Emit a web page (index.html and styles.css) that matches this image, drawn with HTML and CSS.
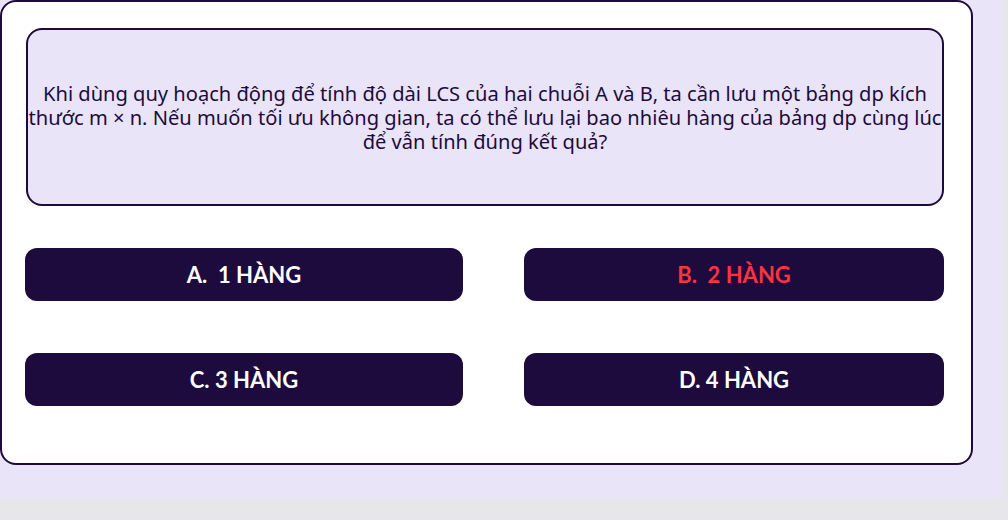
FILE: index.html
```html
<!DOCTYPE html>
<html lang="vi">
<head>
<meta charset="utf-8">
<title>Quiz</title>
<link rel="stylesheet" href="styles.css">
</head>
<body>
<div class="stage">
  <div class="card">
    <div class="question">
      <p>Khi dùng quy hoạch động để tính độ dài LCS của hai chuỗi A và B, ta cần lưu một bảng dp kích<br>thước m × n. Nếu muốn tối ưu không gian, ta có thể lưu lại bao nhiêu hàng của bảng dp cùng lúc<br>để vẫn tính đúng kết quả?</p>
    </div>
    <div class="answers">
      <button class="answer">A.&nbsp; 1 HÀNG</button>
      <button class="answer answer-wrong">B.&nbsp; 2 HÀNG</button>
      <button class="answer">C. 3 HÀNG</button>
      <button class="answer">D. 4 HÀNG</button>
    </div>
  </div>
</div>
</body>
</html>
```

FILE: styles.css
```css
html, body {
  margin: 0;
  padding: 0;
}
body {
  background: #e6e6eb;
  width: 1008px;
  height: 520px;
  overflow: hidden;
  font-family: "Noto Sans", "Open Sans", sans-serif;
}
.stage {
  width: 1002px;
  height: 498px;
  background: #e9e4f8;
}
.card {
  box-sizing: border-box;
  width: 973px;
  height: 465px;
  background: #ffffff;
  border: 2px solid #1e0b3d;
  border-radius: 16px;
  padding: 26px 0 0 24px;
}
.question {
  box-sizing: border-box;
  width: 918px;
  height: 178px;
  background: #e9e4f8;
  border: 2px solid #1e0b3d;
  border-radius: 16px;
  display: flex;
  align-items: center;
  justify-content: center;
  padding-top: 2px;
}
.question p {
  margin: 0;
  text-align: center;
  white-space: nowrap;
  color: #1e0b3d;
  font-size: 20.1px;
  line-height: 24px;
}
.answers {
  margin: 42px 0 0 -1px;
  display: grid;
  grid-template-columns: 438px 420px;
  column-gap: 61px;
  row-gap: 52px;
}
.answer {
  height: 53px;
  border: none;
  border-radius: 12px;
  background: #1d0b3e;
  color: #ffffff;
  font-family: "Lato", "Noto Sans", sans-serif;
  font-weight: 700;
  font-size: 22px;
  padding: 0;
  cursor: pointer;
}
.answer-wrong {
  color: #ff3341;
}
```
